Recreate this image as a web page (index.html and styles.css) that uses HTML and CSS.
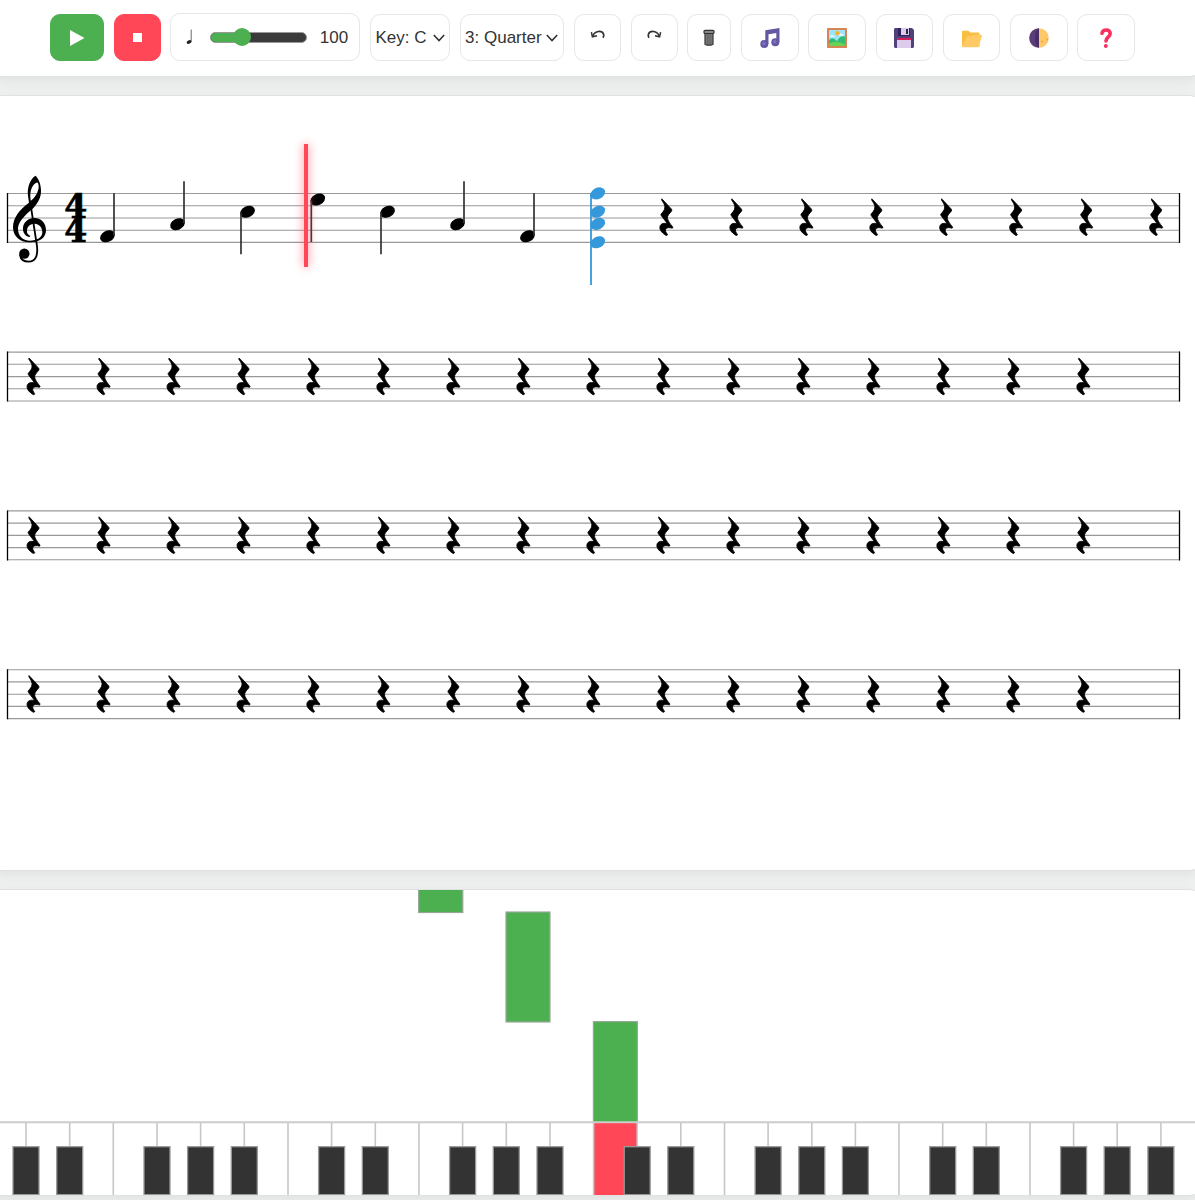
FILE: index.html
```html
<!DOCTYPE html>
<html lang="en">
<head>
<meta charset="utf-8">
<title>Music Notation Editor</title>
<link rel="stylesheet" href="styles.css">
</head>
<body>
<main class="app">
  <header class="panel toolbar">
    <button class="btn play" aria-label="Play"><svg width="16" height="18" viewBox="0 0 16 18"><path d="M1 1 15.5 9 1 17Z" fill="#fff"/></svg></button>
    <button class="btn stop" aria-label="Stop"><svg width="9" height="9"><rect width="9" height="9" fill="#fff"/></svg></button>
    <div class="tempo">
      <svg class="note-icon" width="8" height="16" viewBox="0 0 8 16"><path d="M5.2 .5V13" stroke="#444" stroke-width=".8"/><ellipse cx="3" cy="13" rx="2.5" ry="1.7" transform="rotate(-25 3 13)" fill="#222"/></svg>
      <div class="slider"><div class="slider-fill"></div><div class="thumb"></div></div>
      <span class="bpm">100</span>
    </div>
    <div class="btn select key"><span>Key: C</span><svg width="12" height="8" viewBox="0 0 12 8"><path d="M.8 1 6 6.5 11.2 1" fill="none" stroke="#333" stroke-width="1.6"/></svg></div>
    <div class="btn select duration"><span>3: Quarter</span><svg width="12" height="8" viewBox="0 0 12 8"><path d="M.8 1 6 6.5 11.2 1" fill="none" stroke="#333" stroke-width="1.6"/></svg></div>
    <button class="btn history" aria-label="Undo"><svg class="arrow" width="16" height="10" viewBox="0 0 16 10"><path d="M2.8 5.8C5 .5 12 .2 13.6 4.2 14 5.3 13.7 6.6 13 7.7" fill="none" stroke="#333" stroke-width="1.7"/><path d="M1.4 2.2 2.4 6.8 7 5.7" fill="none" stroke="#333" stroke-width="1.5"/></svg></button>
    <button class="btn history" aria-label="Redo"><svg class="arrow flip" width="16" height="10" viewBox="0 0 16 10"><path d="M2.8 5.8C5 .5 12 .2 13.6 4.2 14 5.3 13.7 6.6 13 7.7" fill="none" stroke="#333" stroke-width="1.7"/><path d="M1.4 2.2 2.4 6.8 7 5.7" fill="none" stroke="#333" stroke-width="1.5"/></svg></button>
    <button class="btn trash" aria-label="Clear"><svg width="12" height="17" viewBox="0 0 12 17"><path d="M2 4.5h8V15.2Q9.8 16.2 6 16.2T2 15.2Z" fill="#888" stroke="#333" stroke-width="1.2"/><path d="M4.2 5v11M6 5v11M7.9 5v11" stroke="#444" stroke-width=".7"/><rect x="1" y="1.3" width="10" height="3.2" rx="1" fill="#888" stroke="#333" stroke-width="1.2"/></svg></button>
    <button class="btn tool" aria-label="MIDI"><svg width="20" height="20" viewBox="0 0 20 20"><path d="M5.3 2.2 19.5 0V14H16.3V5L8.5 6.2V16H5.3Z" fill="#6558a3"/><circle cx="4.3" cy="16" r="4" fill="#6558a3"/><circle cx="15.3" cy="14.2" r="4" fill="#6558a3"/><circle cx="3.8" cy="15.6" r="1.8" fill="#7b6fc0"/><circle cx="14.8" cy="13.8" r="1.8" fill="#7b6fc0"/></svg></button>
    <button class="btn tool" aria-label="Image"><svg width="20" height="20" viewBox="0 0 20 20"><rect width="20" height="20" rx=".7" fill="#d98455"/><rect x="2" y="2" width="16" height="16" fill="#9be4fb"/><circle cx="10.5" cy="5.3" r="2.3" fill="#fbb32c"/><path d="M3 8.5q1-2 3-1 1.5-.5 1.8 1.5H3zM12 6.5q2-2 4.5 0v1.2H12Z" fill="#e4faff"/><path d="M2 12q4-4 8 1.3 3-6.3 8-4.8V18H2Z" fill="#2fbd73"/><path d="M2 15.5q8-4 16 1V18H2Z" fill="#6bd153"/></svg></button>
    <button class="btn tool" aria-label="Save"><svg width="20" height="20" viewBox="0 0 20 20"><path d="M1 0h17l2 2v17l-1 1H1l-1-1V1Z" fill="#50417d"/><path d="M4 0h12v8H4Z" fill="#32235e"/><path d="M7 0h8v7H7Z" fill="#d9cce8"/><path d="M12 1h2v5h-2Z" fill="#30264e"/><path d="M3 10h14v3H3Z" fill="#d61e58"/><path d="M3 12h14v8H3Z" fill="#dccbea"/></svg></button>
    <button class="btn tool" aria-label="Open"><svg width="20" height="20" viewBox="0 0 20 20"><path d="M0 4Q0 2.8 1.2 2.8H6Q7 2.8 8 4.4h8Q17.5 4.4 17.5 5.7V19H1.5Q0 19 0 17Z" fill="#f9bd40"/><path d="M4.6 9.2Q5 8 6.4 8l3-.2L11 6.8h8q1.2 0 .9 1.3L17 18q-.3 1.2-1.6 1.2H1.5Q0 19 .5 17.5Z" fill="#ffca63"/></svg></button>
    <button class="btn tool" aria-label="Theme"><svg width="20" height="20" viewBox="0 0 20 20"><circle cx="10" cy="10" r="9.8" fill="#ffc96a"/><path d="M10 .2a9.8 9.8 0 0 0 0 19.6Z" fill="#5b3d7c"/><path d="M10 .2V19.8Q6 18 6 10T10 .2Z" fill="#482e66"/><circle cx="13" cy="13.5" r="1" fill="#eca14c"/><circle cx="18" cy="11.5" r=".9" fill="#eca14c"/></svg></button>
    <button class="btn tool" aria-label="Help"><svg width="14" height="20" viewBox="0 0 14 20"><path d="M3 5.3C3.4.8 11.2.8 11.2 5.5 11.2 9 7.2 8.8 7 13" fill="none" stroke="#f92f60" stroke-width="3.6" stroke-linecap="round"/><circle cx="6.8" cy="18" r="1.9" fill="#f92f60"/></svg></button>
  </header>

  <section class="panel score">
    <svg class="score-art" width="1195" height="774" viewBox="0 96 1195 774">
      <defs>
        <g id="staff"><path d="M7 193.5H1180M7 205.7H1180M7 218H1180M7 230.2H1180M7 242.4H1180" stroke="#999" stroke-width="1.1"/><path d="M7.5 193V243M1179.5 193V243" stroke="#000" stroke-width="1.3"/></g>
        <path id="rest" transform="translate(0 -.6) scale(.33333)" stroke="#000" stroke-width="2.5" d="M-12-88-14-90Q-16-86-13-84C-5-72 0-62-13-48Q-19-43-16-40L3-15C-10-19-20-14-20-4-20 6-11 14-1 20Q3 20 3 17C-2 11-5 4-2 0 2-4 9-4 17-2Q20-3 19-5C11-15 3-26 3-32 2-39 8-45 15-53Q17-56 15-59Z"/>
        <ellipse id="head" rx="7.7" ry="5.6" transform="rotate(-26)"/>
        <g id="up"><use href="#head"/><path d="M6.5-1V-43" stroke="currentColor" stroke-width="1.7"/></g>
        <g id="down"><use href="#head"/><path d="M-6.5 1V42.5" stroke="currentColor" stroke-width="1.7"/></g>
        <g id="rests4"><use href="#rest"/><use href="#rest" x="70"/><use href="#rest" x="140"/><use href="#rest" x="210"/></g>
        <g id="rest-row"><use href="#staff"/><use href="#rests4" x="33.7" y="230"/><use href="#rests4" x="313.5" y="230"/><use href="#rests4" x="593.5" y="230"/><use href="#rests4" x="873.5" y="230"/></g>
      </defs>
      <use href="#staff"/>
      <g transform="translate(0 140) scale(.33333)">
        <path fill-rule="evenodd" d="M106 107C90 118 81 142 84 168L87 188C60 208 39 232 39 262 39 290 62 308 90 307 120 307 138 292 138 270 138 250 124 234 104 234 84 234 68 248 69 267 69 280 78 290 89 291L91 288C82 284 80 277 81 270 82 258 92 251 104 251 117 251 127 262 127 277 127 293 110 302 90 302 68 302 53 288 54 264 56 244 76 224 98 206 114 190 124 172 123 150 123 134 116 114 106 107ZM110 128C100 130 90 148 91 170L92 183C106 172 115 156 116 142 116 132 114 127 110 128Z"/>
        <path d="M90 182 111 318C114 345 108 365 86 365 72 365 62 357 60 345" fill="none" stroke="#000" stroke-width="5.5"/><circle cx="73" cy="341" r="15.5"/>
      </g>
      <text class="meter" x="64.3" y="217.5" textLength="23">4</text>
      <text class="meter" x="64.3" y="242" textLength="23">4</text>
      <use href="#up" x="107.5" y="236.3"/><use href="#up" x="177.5" y="224.2"/><use href="#down" x="247.5" y="211.8"/><use href="#down" x="317.8" y="199.5"/><use href="#down" x="387.5" y="211.8"/><use href="#up" x="457.5" y="224.2"/><use href="#up" x="527.5" y="236.3"/>
      <g fill="#3498db"><use href="#head" x="597.8" y="193.4"/><use href="#head" x="597.8" y="211.7"/><use href="#head" x="597.8" y="223.9"/><use href="#head" x="597.8" y="242.3"/><path d="M591 193V285" stroke="#3498db" stroke-width="1.8"/></g>
      <use href="#rests4" x="666.5" y="229.4"/><use href="#rests4" x="946.3" y="229.4"/>
      <use href="#rest-row" y="158.6"/><use href="#rest-row" y="317.4"/><use href="#rest-row" y="476.2"/>
    </svg>
    <div class="playhead"></div>
  </section>

  <section class="panel piano">
    <svg class="piano-art" width="1195" height="305" viewBox="0 890 1195 305">
      <defs><rect id="black" x="-13" y="1146.7" width="26" height="48" fill="#333" stroke="#999" stroke-width="1.3"/></defs>
      <g fill="#4caf50" stroke="#98a898" stroke-width="1.2"><rect x="418.6" y="880" width="44.2" height="32.5"/><rect x="506" y="912" width="44" height="110"/><rect x="593.4" y="1021.6" width="44" height="101"/></g>
      <rect x="593.5" y="1122" width="43.7" height="73" fill="#ff4757"/>
      <path d="M26 1122v73M69.7 1122v73M113.3 1122v73M157 1122v73M200.6 1122v73M244.3 1122v73M288 1122v73M331.6 1122v73M375.3 1122v73M419 1122v73M462.6 1122v73M506.3 1122v73M550 1122v73M593.6 1122v73M637.2 1122v73M680.8 1122v73M724.5 1122v73M768.1 1122v73M811.8 1122v73M855.4 1122v73M899 1122v73M942.7 1122v73M986.3 1122v73M1030 1122v73M1073.6 1122v73M1117.2 1122v73M1160.9 1122v73" stroke="#c7c7c7" stroke-width="1.6"/>
      <path d="M0 1122.3H1195" stroke="#ccc" stroke-width="2"/>
      <use href="#black" x="26"/><use href="#black" x="69.7"/><use href="#black" x="157"/><use href="#black" x="200.6"/><use href="#black" x="244.3"/><use href="#black" x="331.6"/><use href="#black" x="375.3"/><use href="#black" x="462.6"/><use href="#black" x="506.3"/><use href="#black" x="550"/><use href="#black" x="637.2"/><use href="#black" x="680.8"/><use href="#black" x="768.1"/><use href="#black" x="811.8"/><use href="#black" x="855.4"/><use href="#black" x="942.7"/><use href="#black" x="986.3"/><use href="#black" x="1073.6"/><use href="#black" x="1117.2"/><use href="#black" x="1160.9"/>
    </svg>
  </section>
</main>
</body>
</html>
```
FILE: styles.css
```css
* { box-sizing: border-box; }
body {
  margin: 0;
  height: 1200px;
  overflow: hidden;
  background: #f0f3f2;
  color: #333;
  font-family: "Liberation Sans", Arial, sans-serif;
}
svg { display: block; flex: none; }
.app {
  display: flex;
  flex-direction: column;
  gap: 18px;
  margin: 0 -7px 0 -12px;
}
.panel {
  background: #fff;
  border: 1px solid #e0e2e1;
  border-radius: 12px;
  box-shadow: 0 4px 16px rgba(0, 0, 0, .08);
  overflow: hidden;
}
.toolbar {
  display: flex;
  align-items: center;
  gap: 9.68px;
  height: 79px;
  margin-top: -2px;
  padding: 0 0 0 60.5px;
}
.btn {
  display: flex;
  flex: none;
  align-items: center;
  justify-content: center;
  height: 46.5px;
  padding: 0;
  border: 1px solid #e6e6e6;
  border-radius: 10px;
  background: #fff;
  color: #333;
}
.play { width: 54.4px; background: #4caf50; border-color: #4caf50; }
.stop { width: 47px; background: #ff4757; border-color: #ff4757; }
.tempo {
  display: flex;
  flex: none;
  align-items: center;
  width: 190px;
  height: 48px;
  margin-top: -1px;
  padding-left: 15px;
  border: 1px solid #e6e6e6;
  border-radius: 10px;
  font-size: 17px;
}
.note-icon { margin-right: 16px; }
.slider {
  display: flex;
  align-items: center;
  width: 97px;
  height: 11px;
  border: 1px solid #999;
  border-radius: 6px;
  background: #3b3b3b;
}
.slider-fill {
  width: 31px;
  height: 9px;
  border-radius: 5px 0 0 5px;
  background: #4caf50;
}
.thumb {
  width: 18px;
  height: 18px;
  margin-left: -9px;
  border-radius: 50%;
  background: #4caf50;
}
.bpm { margin-left: 12.5px; padding-top: 1px; }
.select {
  justify-content: flex-start;
  padding-left: 4.5px;
  font-size: 17px;
  white-space: nowrap;
}
.key { width: 80px; }
.key svg { margin-left: 6.5px; }
.duration { width: 104.8px; }
.duration svg { margin-left: 4.5px; }
.history { width: 47px; }
.arrow { margin-bottom: 5px; }
.flip { transform: scaleX(-1); }
.trash { width: 44px; }
.tool { width: 57.6px; }
.score { position: relative; height: 776px; }
.score-art { margin-left: 11px; }
.meter {
  font: bold 33px "DejaVu Serif", serif;
  stroke: #000;
  stroke-width: .7px;
}
.playhead {
  position: absolute;
  left: 315px;
  top: 48px;
  width: 4px;
  height: 123px;
  background: #ff4757;
  box-shadow: 0 0 10px rgba(255, 71, 87, .8);
}
.piano { height: 307px; }
.piano-art { margin-left: 11px; }
```
